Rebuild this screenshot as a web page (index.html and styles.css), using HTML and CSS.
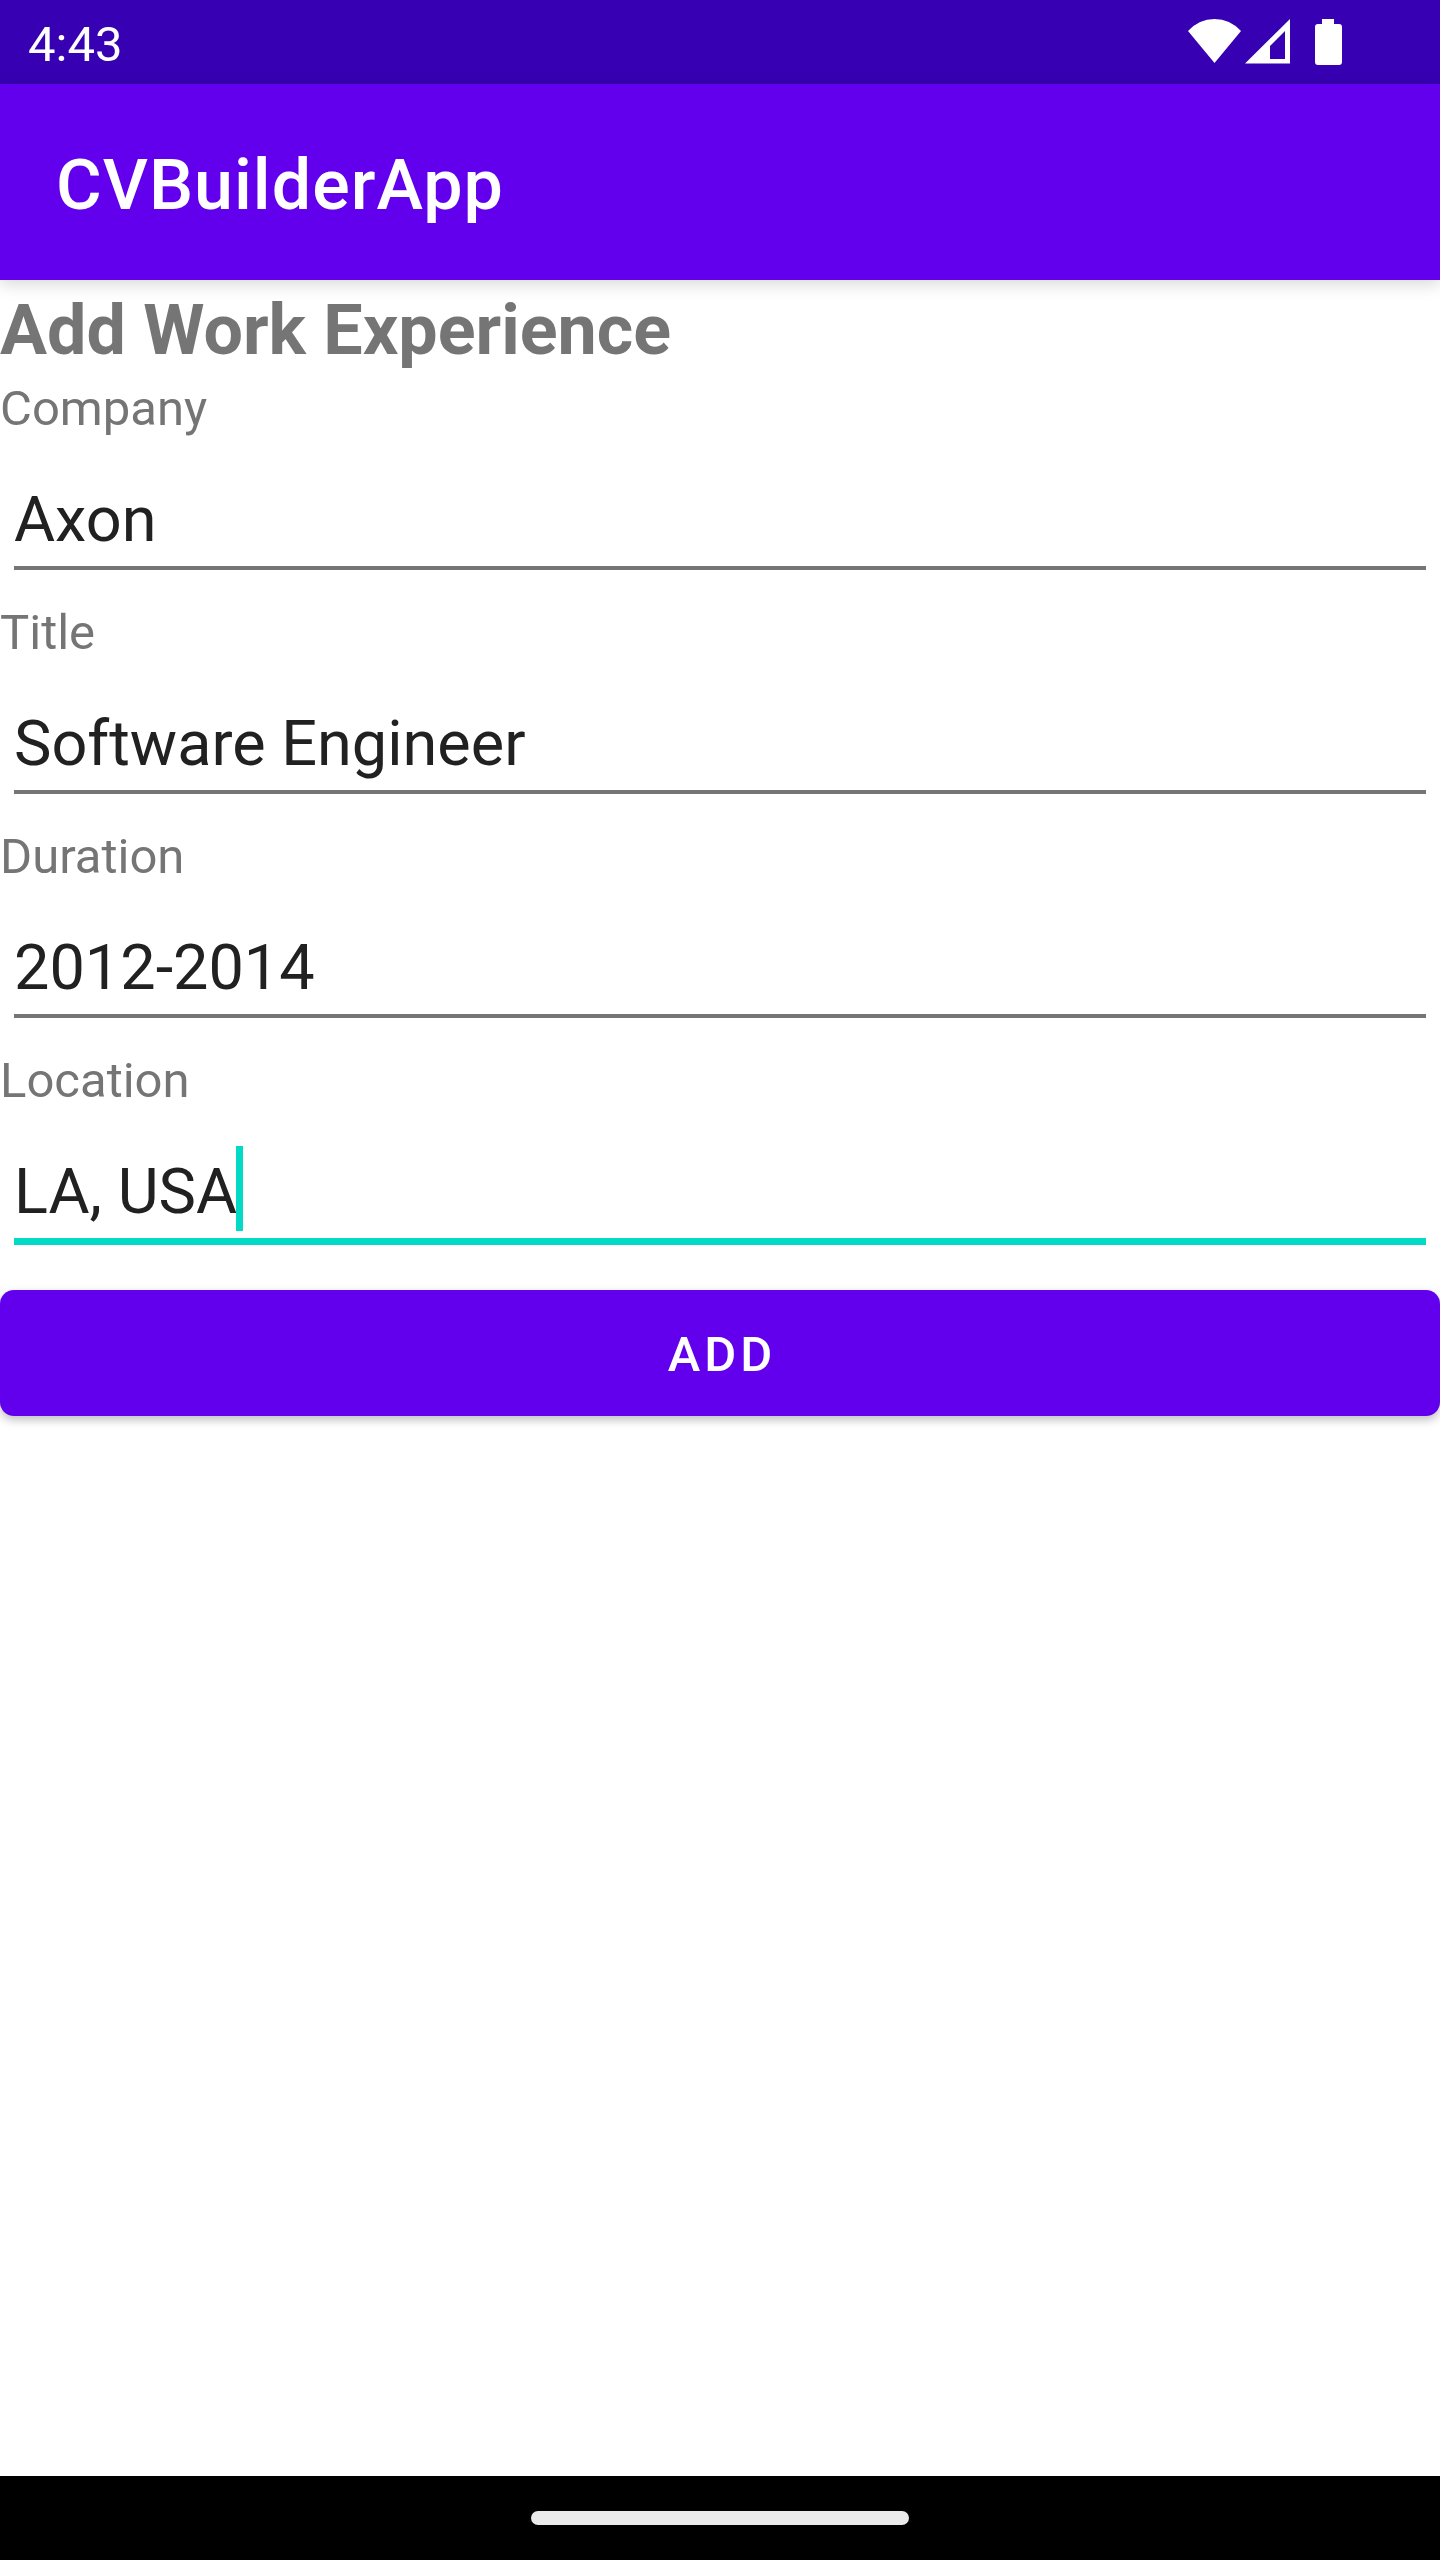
FILE: index.html
```html
<!DOCTYPE html>
<html lang="en">
<head>
<meta charset="utf-8">
<meta name="viewport" content="width=device-width, initial-scale=1">
<title>CVBuilderApp</title>
<link rel="stylesheet" href="styles.css">
</head>
<body>
<div class="status-bar">
  <span class="clock">4:43</span>
  <svg class="status-icons" width="154" height="46" viewBox="0 0 154 46" fill="#fff" role="img" aria-label="Wi-Fi, mobile signal, battery full">
    <path d="M0 12Q11 0 26.500 0Q42 0 53 12L26.500 44Z"/>
    <path fill-rule="evenodd" d="M57 44.500L102 0V44.500ZM82 27V40H97V12Z"/>
    <path d="M134 0H146V5H151Q154 5 154 8V43Q154 46 151 46H130Q127 46 127 43V8Q127 5 130 5H134Z"/>
  </svg>
</div>
<header class="app-bar">
  <h1 class="app-title">CVBuilderApp</h1>
</header>
<main class="content">
  <h2 class="heading">Add Work Experience</h2>
  <form class="form">
    <label class="label" for="company">Company</label>
    <div class="field"><input class="input" id="company" type="text" value="Axon"></div>
    <label class="label" for="title">Title</label>
    <div class="field"><input class="input" id="title" type="text" value="Software Engineer"></div>
    <label class="label" for="duration">Duration</label>
    <div class="field"><input class="input" id="duration" type="text" value="2012-2014"></div>
    <label class="label" for="location">Location</label>
    <div class="field field-active"><input class="input" id="location" type="text" value="LA, USA"><span class="caret"></span></div>
    <button class="add-button" type="button">ADD</button>
  </form>
</main>
<footer class="nav-bar"><span class="nav-handle"></span></footer>
</body>
</html>
```
FILE: styles.css
```css
* {
  box-sizing: border-box;
}

body {
  margin: 0;
  min-height: 100vh;
  display: flex;
  flex-direction: column;
  background: #fff;
  color: #757575;
  font-family: Roboto, sans-serif;
}

.status-bar {
  display: flex;
  justify-content: space-between;
  align-items: center;
  height: 84px;
  padding: 0 98px 0 28px;
  background: #3700b3;
}

.clock {
  padding-top: 6px;
  color: #fff;
  font-size: 49px;
  line-height: 58px;
}

.app-bar {
  display: flex;
  align-items: center;
  height: 196px;
  padding: 6px 56px 0;
  background: #6200ee;
  box-shadow: 0 4px 16px rgba(0, 0, 0, 0.16);
}

.app-title {
  margin: 0;
  color: #fff;
  font-size: 70px;
  font-weight: 500;
  letter-spacing: 1px;
  line-height: 82px;
}

.content {
  flex: 1;
}

.heading {
  margin: 0;
  padding: 9px 0 2px;
  font-size: 70px;
  font-weight: 700;
  line-height: 82px;
}

.form {
  display: flex;
  flex-direction: column;
}

.label {
  padding: 7px 0 0;
  font-size: 49px;
  line-height: 58px;
}

.field {
  position: relative;
  height: 159px;
  padding: 0 14px;
}

.input {
  display: block;
  width: 100%;
  height: 132px;
  margin: 0;
  padding: 44px 0 10px;
  border: 0;
  border-bottom: 4px solid #757575;
  border-radius: 0;
  outline: 0;
  background: transparent;
  color: #212121;
  font-family: inherit;
  font-size: 63px;
  line-height: 74px;
}

.field-active .input {
  height: 135px;
  border-bottom: 7px solid #03dac5;
}

/* Text cursor at the end of the focused value */
.caret {
  position: absolute;
  top: 36px;
  left: 236px;
  width: 7px;
  height: 85px;
  background: #03dac5;
}

.add-button {
  height: 126px;
  margin: 21px 0 0;
  padding: 4px 0 0 4px;
  border: 0;
  border-radius: 14px;
  background: #6200ee;
  box-shadow: 0 4px 10px rgba(0, 0, 0, 0.25);
  color: #fff;
  font-family: inherit;
  font-size: 49px;
  font-weight: 500;
  letter-spacing: 4px;
  line-height: 58px;
}

.nav-bar {
  display: flex;
  justify-content: center;
  align-items: center;
  height: 84px;
  background: #000;
}

.nav-handle {
  width: 378px;
  height: 14px;
  border-radius: 7px;
  background: #ebebeb;
}
```
